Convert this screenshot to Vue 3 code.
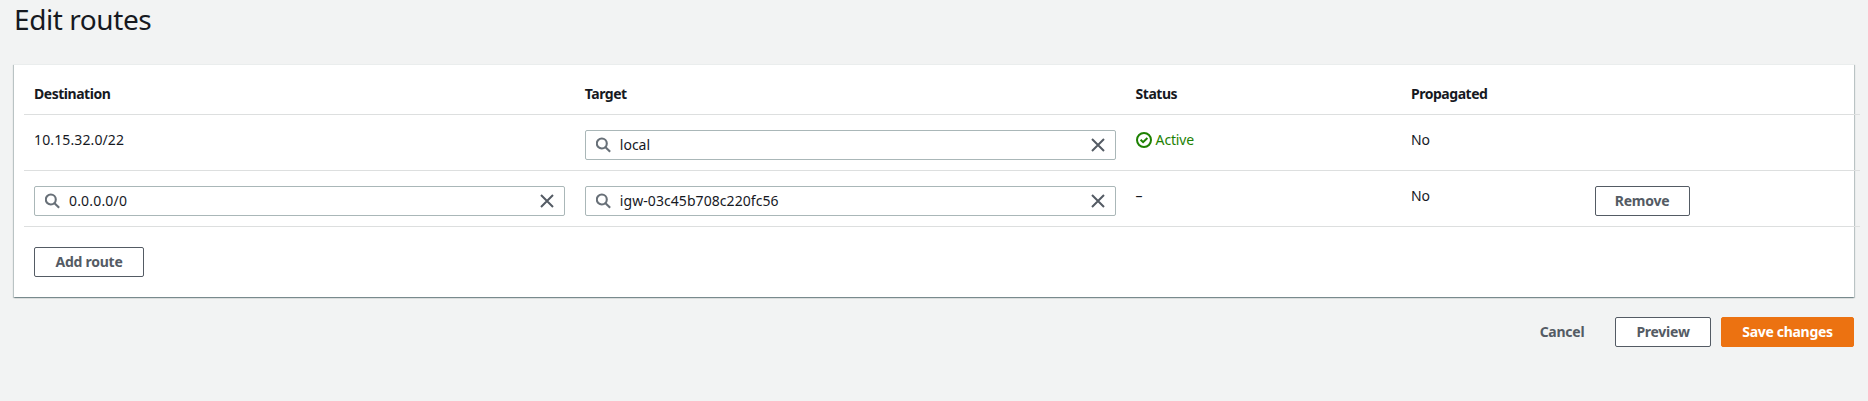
<script setup>
import { h } from 'vue'

const columns = ['Destination', 'Target', 'Status', 'Propagated', '']
const routes = [
  { destination: '10.15.32.0/22', target: 'local', active: true, propagated: 'No' },
  { destination: '0.0.0.0/0', target: 'igw-03c45b708c220fc56', editable: true, propagated: 'No' },
]

const SearchField = (props) =>
  h('div', { class: 'field' }, [
    h('svg', { class: 'search', viewBox: '0 0 16 16' }, [
      h('circle', { cx: 5.8, cy: 6.5, r: 5 }),
      h('path', { d: 'M9.5 10.2 13.4 14.1' }),
    ]),
    h('span', { class: ['value', props.kind] }, props.value),
    h('svg', { class: 'clear', viewBox: '0 0 16 16' }, [h('path', { d: 'M2 2 14 14M14 2 2 14' })]),
  ])
SearchField.props = ['value', 'kind']
</script>

<template>
  <main class="page">
    <h1>Edit routes</h1>
    <section class="card">
      <div class="table">
        <div class="row head">
          <div v-for="c in columns" :key="c" class="cell"><span class="label">{{ c }}</span></div>
        </div>
        <div v-for="r in routes" :key="r.target" class="row">
          <div class="cell">
            <SearchField v-if="r.editable" :value="r.destination" kind="cidr" />
            <span v-else class="plain address">{{ r.destination }}</span>
          </div>
          <div class="cell"><SearchField :value="r.target" :kind="r.editable ? 'gateway' : 'local'" /></div>
          <div class="cell">
            <span v-if="r.active" class="plain status">
              <svg viewBox="0 0 16 16"><circle cx="8" cy="8" r="7" /><path d="M4.6 7.8 7.1 10.2 11.4 6" /></svg>
              <span class="active">Active</span>
            </span>
            <span v-else class="plain">–</span>
          </div>
          <div class="cell"><span class="plain">{{ r.propagated }}</span></div>
          <div class="cell"><button v-if="r.editable" class="btn remove">Remove</button></div>
        </div>
      </div>
      <button class="btn add">Add route</button>
    </section>
    <footer>
      <button class="btn cancel">Cancel</button>
      <button class="btn preview">Preview</button>
      <button class="btn save">Save changes</button>
    </footer>
  </main>
</template>

<style>
body { background: #f2f3f3; }
</style>

<style scoped>
.page {
  height: 401px;
  box-sizing: border-box;
  padding: 0 14px;
  overflow: hidden;
  background: #f2f3f3;
  color: #16191f;
  font: 14px/22px "Noto Sans", "Open Sans", sans-serif;
}
h1 {
  margin: 0;
  height: 64px;
  font-size: 28px;
  line-height: 38px;
  font-weight: 400;
  letter-spacing: -0.43px;
}
.card {
  height: 233px;
  box-sizing: border-box;
  padding: 0 10px;
  background: #fff;
  box-shadow: 0 1px 1px 0 rgba(0, 28, 36, 0.22), 1px 1px 1px 0 rgba(0, 40, 46, 0.2), -1px 1px 1px 0 rgba(0, 40, 46, 0.2);
  border-top: 1px solid #eaeded;
}
.table { width: 1836px; }
.row {
  display: grid;
  grid-template-columns: 30% 30% 15% 10% 15%;
  height: 56px;
  box-sizing: border-box;
  border-bottom: 1px solid #dddfdf;
}
.head { height: 50px; }
.cell { padding: 15px 10px 0; min-width: 0; }
.head .cell { padding-top: 18px; }
.label { font-weight: 700; letter-spacing: -0.47px; }
.plain { display: block; line-height: 22px; }
.row:not(.head) .plain { margin-top: -1px; }
.address { letter-spacing: 0.12px; }
.row .status { color: #1d8102; display: flex; align-items: center; gap: 4px; }
.active { letter-spacing: -0.15px; }
svg { fill: none; stroke: currentColor; flex: none; }
.status svg { width: 16px; height: 16px; stroke-width: 2; }
:deep(.field) {
  display: flex;
  align-items: center;
  height: 30px;
  box-sizing: border-box;
  border: 1px solid #aab7b8;
  border-radius: 2px;
  padding: 0 9px 0 10px;
  background: #fff;
}
:deep(.field svg) { width: 16px; height: 16px; fill: none; stroke: #687078; stroke-width: 2; flex: none; }
:deep(.field .clear) { stroke: #545b64; }
:deep(.field .search) { stroke-width: 2.1; stroke-linecap: square; }
:deep(.value) { flex: 1; margin-left: 8px; }
:deep(.cidr) { letter-spacing: 0.18px; }
:deep(.gateway) { letter-spacing: 0.07px; }
.btn {
  height: 30px;
  box-sizing: border-box;
  border: 1px solid #545b64;
  border-radius: 2px;
  padding: 0;
  background: #fff;
  color: #545b64;
  font: 700 14px/20px "Noto Sans", "Open Sans", sans-serif;
  letter-spacing: -0.25px;
  white-space: nowrap;
}
.remove { display: block; width: 95px; }
.add { display: block; width: 110px; margin: 20px 0 0 10px; }
footer { display: flex; justify-content: flex-end; padding-top: 20px; }
.cancel { width: 86px; margin-right: 10px; background: transparent; border-color: transparent; }
.preview { width: 96px; margin-right: 10px; }
.save { width: 133px; background: #ec7211; border-color: #ec7211; color: #fff; letter-spacing: -0.3px; }
</style>
